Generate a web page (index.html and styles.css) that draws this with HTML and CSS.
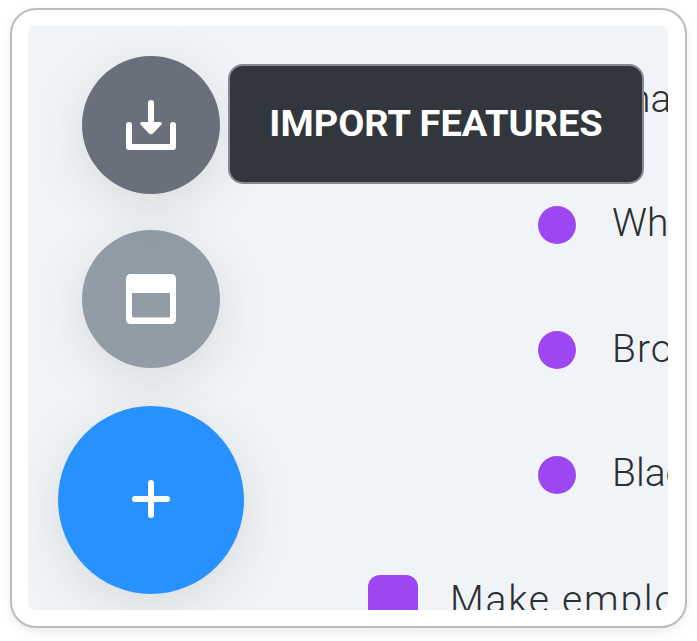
FILE: index.html
```html
<!DOCTYPE html>
<html lang="en">
<head>
<meta charset="utf-8">
<title>Features</title>
<link rel="stylesheet" href="styles.css">
</head>
<body>
<div class="frame">
  <main class="canvas">
    <nav class="actions">
      <button class="action import" aria-label="Import features">
        <svg width="50" height="50" viewBox="0 0 50 50"><path d="M3 25V47H47V25M25 3V24" fill="none" stroke="#fff" stroke-width="6" stroke-linecap="round" stroke-linejoin="round"/><path d="M16 22H34Q36.500 22 35.500 24.500L27 33.500Q25 35 23 33.500L14.500 24.500Q13.500 22 16 22Z" fill="#fff"/></svg>
        <span class="tooltip"><span class="label">IMPORT FEATURES</span></span>
      </button>
      <button class="action panel" aria-label="New panel">
        <svg width="50" height="50" viewBox="0 0 50 50"><path fill="#fff" fill-rule="evenodd" d="M5 0H45Q50 0 50 5V45Q50 50 45 50H5Q0 50 0 45V5Q0 0 5 0ZM6 19V42Q6 43.500 7.500 43.500H42.500Q44 43.500 44 42V19Z"/></svg>
      </button>
      <button class="action add" aria-label="Add">
        <svg width="38" height="38" viewBox="0 0 38 38"><path d="M3 19H35M19 3V35" stroke="#fff" stroke-width="6" stroke-linecap="round"/></svg>
      </button>
    </nav>
    <ul class="features">
      <li class="child first"><span class="text">na</span></li>
      <li class="child"><i class="dot"></i><span class="text">Wh</span></li>
      <li class="child"><i class="dot"></i><span class="text bro">Bro</span></li>
      <li class="child"><i class="dot"></i><span class="text">Blac</span></li>
      <li class="parent"><i class="square"></i><span class="text">Make emplo</span></li>
    </ul>
  </main>
</div>
</body>
</html>
```
FILE: styles.css
```css
* { box-sizing: border-box; }
body {
  margin: 0;
  height: 641px;
  padding: 7.5px 10px 0 10px;
  background: #fff;
  overflow: hidden;
  font-family: Roboto, "Liberation Sans", sans-serif;
}
.frame {
  width: 677px;
  height: 620px;
  padding: 16.500px 16px 16px;
  border: 2px solid #bcbcbc;
  border-radius: 26px;
  background: #fff;
  box-shadow: 0 4px 10px rgba(0, 0, 0, .08);
}
.canvas {
  display: flex;
  width: 640px;
  height: 584px;
  border-radius: 7px;
  background: #f0f4f8;
  overflow: hidden;
}
.actions {
  display: flex;
  flex: 0 0 246px;
  flex-direction: column;
  align-items: center;
  gap: 36px;
  padding-top: 30px;
}
.action {
  position: relative;
  display: flex;
  flex: none;
  align-items: center;
  justify-content: center;
  width: 138px;
  height: 138px;
  padding: 0;
  border: 0;
  border-radius: 50%;
  box-shadow: 0 12px 50px rgba(80, 75, 50, .14);
  font-family: inherit;
}
.import { z-index: 2; background: #69707c; }
.panel { background: #929ca6; }
.add {
  width: 186px;
  height: 188px;
  margin-top: 2px;
  background: #2792ff;
}
.add svg { margin-top: -3px; }
.tooltip {
  position: absolute;
  left: 146px;
  top: 8px;
  display: flex;
  align-items: center;
  justify-content: center;
  width: 416px;
  height: 120px;
  border: 2px solid #858a90;
  border-radius: 15px;
  background: #32363d;
  color: #fff;
  font-size: 36px;
  font-weight: 700;
  white-space: nowrap;
}
.label { transform: scaleX(1.055); }
.features {
  flex: 1;
  min-width: 0;
  margin: 0;
  padding: 11.500px 0 0;
  list-style: none;
  color: #2b2f34;
  font-size: 39px;
  font-weight: 300;
}
.features li {
  display: flex;
  align-items: center;
  height: 125px;
  white-space: nowrap;
}
.child { padding-left: 264px; gap: 36px; }
.first { padding-left: 355px; }
.first .text { padding-top: 3px; }
.child .text { margin-top: -5px; }
.child .bro { margin-top: -3px; letter-spacing: 1px; }
.parent { padding-left: 94px; gap: 32px; letter-spacing: 1.800px; }
.dot {
  flex: none;
  width: 38px;
  height: 38px;
  border-radius: 50%;
  background: #9d47f2;
}
.square {
  flex: none;
  width: 50px;
  height: 50px;
  border-radius: 12px;
  background: #9d47f2;
}
```
